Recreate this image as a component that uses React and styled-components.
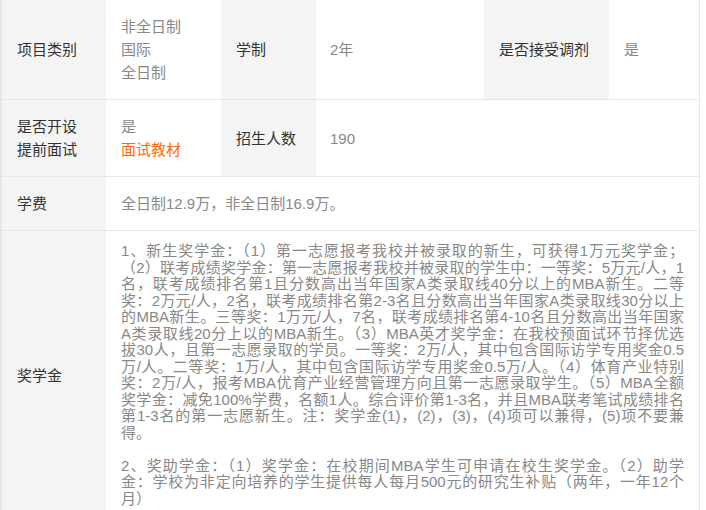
import styled, { createGlobalStyle } from 'styled-components'

const GlobalStyle = createGlobalStyle`
  html, body {
    margin: 0;
    padding: 0;
    background: #fff;
  }
  body {
    font-family: 'Liberation Sans', 'Noto Sans CJK SC', sans-serif;
    font-size: 15px;
  }
`

const InfoTable = styled.table`
  width: 700px;
  table-layout: fixed;
  border-collapse: collapse;
  border-left: 2px solid #e6e6e6;
  border-right: 1px solid #e6e6e6;

  tr {
    border-bottom: 1px solid #e6e6e6;
  }
`

const Label = styled.th`
  background-color: #f4f4f4;
  color: #333;
  font-weight: normal;
  text-align: left;
  vertical-align: middle;
  padding: 15px 14px 15px 15px;
  line-height: 23px;
`

const Value = styled.td`
  background-color: #fff;
  color: #888;
  text-align: left;
  vertical-align: middle;
  padding: ${(p) => (p.$tight ? '12px' : '15px')} 15px ${(p) => (p.$tight ? '12px' : '15px')}
    ${(p) => p.$indent || 15}px;
  line-height: 23px;
`

const Link = styled.span`
  color: #ff6a00;
  display: block;
`

const Stack = styled.span`
  display: block;
`

const Para = styled.div`
  color: #888;
  line-height: 16.5px;

  & + & {
    margin-top: 16.5px;
  }
`

const Line = styled.span`
  display: block;
  white-space: nowrap;
  text-align: justify;
  text-align-last: ${(p) => (p.$last ? 'left' : 'justify')};
`

const scholarship = [
  [
    '1、新生奖学金：（1）第一志愿报考我校并被录取的新生，可获得1万元奖学金；',
    '（2）联考成绩奖学金：第一志愿报考我校并被录取的学生中：一等奖：5万元/人，1',
    '名，联考成绩排名第1且分数高出当年国家A类录取线40分以上的MBA新生。二等',
    '奖：2万元/人，2名，联考成绩排名第2-3名且分数高出当年国家A类录取线30分以上',
    '的MBA新生。三等奖：1万元/人，7名，联考成绩排名第4-10名且分数高出当年国家',
    'A类录取线20分上以的MBA新生。（3）MBA英才奖学金：在我校预面试环节择优选',
    '拔30人，且第一志愿录取的学员。一等奖：2万/人，其中包含国际访学专用奖金0.5',
    '万/人。二等奖：1万/人，其中包含国际访学专用奖金0.5万/人。（4）体育产业特别',
    '奖：2万/人，报考MBA优育产业经营管理方向且第一志愿录取学生。（5）MBA全额',
    '奖学金：减免100%学费，名额1人。综合评价第1-3名，并且MBA联考笔试成绩排名',
    '第1-3名的第一志愿新生。注：奖学金(1)，(2)，(3)，(4)项可以兼得，(5)项不要兼',
    '得。',
  ],
  [
    '2、奖助学金：（1）奖学金：在校期间MBA学生可申请在校生奖学金。（2）助学',
    '金：学校为非定向培养的学生提供每人每月500元的研究生补贴（两年，一年12个',
    '月）',
  ],
]

export default function App() {
  return (
    <>
      <GlobalStyle />
      <InfoTable>
        <colgroup>
          <col style={{ width: 105 }} />
          <col style={{ width: 115 }} />
          <col style={{ width: 95 }} />
          <col style={{ width: 168 }} />
          <col style={{ width: 125 }} />
          <col />
        </colgroup>
        <tbody>
          <tr>
            <Label>项目类别</Label>
            <Value>
              <Stack>非全日制</Stack>
              <Stack>国际</Stack>
              <Stack>全日制</Stack>
            </Value>
            <Label>学制</Label>
            <Value $indent={14}>2年</Value>
            <Label>是否接受调剂</Label>
            <Value>是</Value>
          </tr>
          <tr>
            <Label>
              是否开设
              <br />
              提前面试
            </Label>
            <Value>
              <Stack>是</Stack>
              <Link>面试教材</Link>
            </Value>
            <Label>招生人数</Label>
            <Value $indent={14} colSpan={3}>
              190
            </Value>
          </tr>
          <tr>
            <Label>学费</Label>
            <Value colSpan={5}>全日制12.9万，非全日制16.9万。</Value>
          </tr>
          <tr>
            <Label>奖学金</Label>
            <Value colSpan={5} $tight>
              {scholarship.map((lines, i) => (
                <Para key={i}>
                  {lines.map((text, j) => (
                    <Line key={j} $last={j === lines.length - 1}>
                      {text}
                    </Line>
                  ))}
                </Para>
              ))}
            </Value>
          </tr>
        </tbody>
      </InfoTable>
    </>
  )
}
